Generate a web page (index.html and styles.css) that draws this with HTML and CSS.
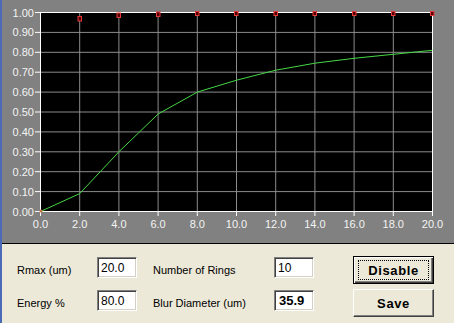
FILE: index.html
```html
<!DOCTYPE html>
<html lang="en">
<head>
  <meta charset="UTF-8">
  <title>Encircled Energy</title>
  <link rel="stylesheet" href="styles.css">
</head>
<body>
<div class="window">
  <div class="chart">
    <svg width="452" height="243" viewBox="2 0 452 243">
      <rect x="40.5" y="12.5" width="392" height="199" fill="#000"/>
      <g stroke="#8c8c8c" stroke-width="1">
        <line x1="41" y1="32.4" x2="432" y2="32.4"/>
        <line x1="41" y1="52.3" x2="432" y2="52.3"/>
        <line x1="41" y1="72.2" x2="432" y2="72.2"/>
        <line x1="41" y1="92.1" x2="432" y2="92.1"/>
        <line x1="41" y1="112" x2="432" y2="112"/>
        <line x1="41" y1="131.9" x2="432" y2="131.9"/>
        <line x1="41" y1="151.8" x2="432" y2="151.8"/>
        <line x1="41" y1="171.7" x2="432" y2="171.7"/>
        <line x1="41" y1="191.6" x2="432" y2="191.6"/>
        <line x1="79.7" y1="13" x2="79.7" y2="211"/>
        <line x1="118.9" y1="13" x2="118.9" y2="211"/>
        <line x1="158.1" y1="13" x2="158.1" y2="211"/>
        <line x1="197.3" y1="13" x2="197.3" y2="211"/>
        <line x1="236.5" y1="13" x2="236.5" y2="211"/>
        <line x1="275.7" y1="13" x2="275.7" y2="211"/>
        <line x1="314.9" y1="13" x2="314.9" y2="211"/>
        <line x1="354.1" y1="13" x2="354.1" y2="211"/>
        <line x1="393.3" y1="13" x2="393.3" y2="211"/>
      </g>
      <rect x="40.5" y="12.5" width="392" height="199" fill="none" stroke="#fff"/>
      <g stroke="#fff">
        <line x1="35" y1="12.5" x2="40" y2="12.5"/>
        <line x1="35" y1="32.4" x2="40" y2="32.4"/>
        <line x1="35" y1="52.3" x2="40" y2="52.3"/>
        <line x1="35" y1="72.2" x2="40" y2="72.2"/>
        <line x1="35" y1="92.1" x2="40" y2="92.1"/>
        <line x1="35" y1="112" x2="40" y2="112"/>
        <line x1="35" y1="131.9" x2="40" y2="131.9"/>
        <line x1="35" y1="151.8" x2="40" y2="151.8"/>
        <line x1="35" y1="171.7" x2="40" y2="171.7"/>
        <line x1="35" y1="191.6" x2="40" y2="191.6"/>
        <line x1="35" y1="211.5" x2="40" y2="211.5"/>
        <line x1="40.5" y1="212" x2="40.5" y2="216"/>
        <line x1="79.7" y1="212" x2="79.7" y2="216"/>
        <line x1="118.9" y1="212" x2="118.9" y2="216"/>
        <line x1="158.1" y1="212" x2="158.1" y2="216"/>
        <line x1="197.3" y1="212" x2="197.3" y2="216"/>
        <line x1="236.5" y1="212" x2="236.5" y2="216"/>
        <line x1="275.7" y1="212" x2="275.7" y2="216"/>
        <line x1="314.9" y1="212" x2="314.9" y2="216"/>
        <line x1="354.1" y1="212" x2="354.1" y2="216"/>
        <line x1="393.3" y1="212" x2="393.3" y2="216"/>
        <line x1="432.5" y1="212" x2="432.5" y2="216"/>
      </g>
      <g class="ylabels" text-anchor="end">
        <text x="34" y="16.5">1.00</text>
        <text x="34" y="36.4">0.90</text>
        <text x="34" y="56.3">0.80</text>
        <text x="34" y="76.2">0.70</text>
        <text x="34" y="96.1">0.60</text>
        <text x="34" y="116">0.50</text>
        <text x="34" y="135.9">0.40</text>
        <text x="34" y="155.8">0.30</text>
        <text x="34" y="175.7">0.20</text>
        <text x="34" y="195.6">0.10</text>
        <text x="34" y="215.5">0.00</text>
      </g>
      <g class="xlabels" text-anchor="middle">
        <text x="40.5" y="228">0.0</text>
        <text x="79.7" y="228">2.0</text>
        <text x="118.9" y="228">4.0</text>
        <text x="158.1" y="228">6.0</text>
        <text x="197.3" y="228">8.0</text>
        <text x="236.5" y="228">10.0</text>
        <text x="275.7" y="228">12.0</text>
        <text x="314.9" y="228">14.0</text>
        <text x="354.1" y="228">16.0</text>
        <text x="393.3" y="228">18.0</text>
        <text x="432.5" y="228">20.0</text>
      </g>
      <polyline fill="none" stroke="#45d845" stroke-width="1"
        points="40.5,211.5 79.7,193.6 118.9,151.8 158.1,114 197.3,92.1 236.5,80.2 275.7,70.2 314.9,63.2 354.1,58.3 393.3,54.3 432.5,50.3"/>
      <circle cx="41" cy="211" r="1.5" fill="#c87040"/>
      <g fill="#500" stroke="#e83838" stroke-width="1">
        <rect x="78" y="16.5" width="3.5" height="4.5"/>
        <rect x="117" y="13" width="3.5" height="4.5"/>
        <rect x="156.5" y="12" width="3.5" height="4.5"/>
        <rect x="195.5" y="11.5" width="3.5" height="4"/>
        <rect x="234.5" y="11.5" width="3.5" height="4"/>
        <rect x="274" y="11.5" width="3.5" height="4"/>
        <rect x="313" y="11.5" width="3.5" height="4"/>
        <rect x="352.5" y="11.5" width="3.5" height="4"/>
        <rect x="391.5" y="11.5" width="3.5" height="4"/>
        <rect x="430.5" y="11.5" width="3.5" height="4"/>
      </g>
    </svg>
  </div>
  <div class="panel">
    <span class="label">Rmax (um)</span>
    <input class="field" type="text" value="20.0">
    <span class="label">Number of Rings</span>
    <input class="field" type="text" value="10">
    <button class="btn default">Disable</button>
    <span class="label">Energy %</span>
    <input class="field" type="text" value="80.0">
    <span class="label">Blur Diameter (um)</span>
    <div class="field readout">35.9</div>
    <button class="btn">Save</button>
  </div>
</div>
</body>
</html>
```

FILE: styles.css
```css
body {
  margin: 0;
  font-family: "Liberation Sans", Arial, sans-serif;
}
.window {
  width: 452px;
  height: 323px;
  border-left: 2px solid #4a6ab8;
  display: flex;
  flex-direction: column;
  background: #ece9d8;
}
.chart {
  height: 243px;
  background: #818181;
  border-bottom: 1px solid #000;
}
.chart svg {
  display: block;
}
.ylabels text, .xlabels text {
  fill: #f4f4f4;
  font-size: 11px;
  font-family: "Liberation Sans", Arial, sans-serif;
}
.panel {
  display: grid;
  grid-template-columns: 80px 56px 121px 79px 81px;
  grid-template-rows: 28px 28px;
  row-gap: 5px;
  padding: 12px 0 0 15px;
  align-items: center;
}
.label {
  font-size: 11px;
  color: #000;
}
.field {
  box-sizing: border-box;
  width: 40px;
  height: 21px;
  margin: 1px 0 0 0;
  align-self: start;
  padding: 0 0 0 3px;
  font-family: "Liberation Sans", Arial, sans-serif;
  font-size: 12px;
  color: #000;
  background: #fff;
  border: 1px solid;
  border-color: #808080 #fff #fff #808080;
  box-shadow: inset 1px 1px #404040, inset -1px -1px #d4d0c8;
  outline: none;
}
.readout {
  display: flex;
  align-items: center;
  font-weight: bold;
  font-size: 13px;
  padding-left: 4px;
}
.btn {
  position: relative;
  box-sizing: border-box;
  width: 81px;
  height: 28px;
  padding: 0;
  font-family: "Liberation Sans", Arial, sans-serif;
  font-weight: bold;
  font-size: 13px;
  letter-spacing: 0.6px;
  color: #000;
  background: #ece9d8;
  border: 1px solid;
  border-color: #fff #404040 #404040 #fff;
  box-shadow: inset -1px -1px #808080;
}
.btn.default {
  border-color: #000;
  box-shadow: inset 1px 1px #fff, inset -1px -1px #404040, inset -2px -2px #808080;
}
.btn.default::after {
  content: "";
  position: absolute;
  inset: 3px 4px;
  border: 1px dotted #000;
}
```
